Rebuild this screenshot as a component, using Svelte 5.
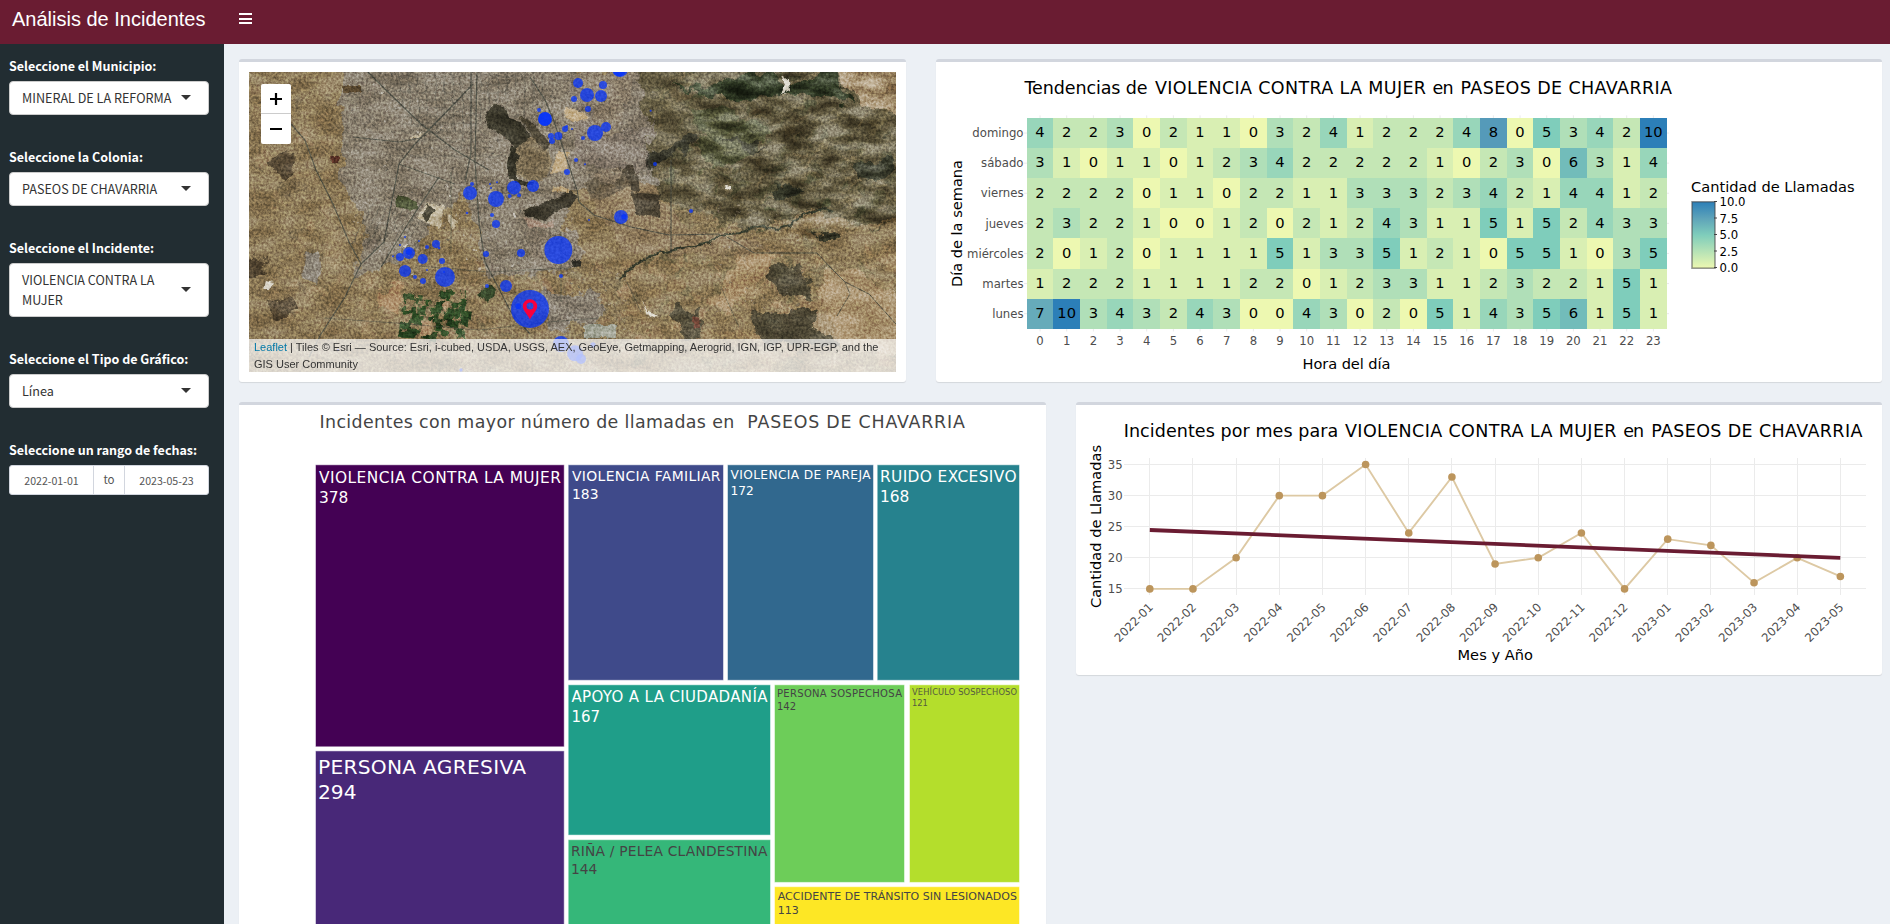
<script>
  const selects = [
    { label: 'Seleccione el Municipio:', value: 'MINERAL DE LA REFORMA' },
    { label: 'Seleccione la Colonia:', value: 'PASEOS DE CHAVARRIA' },
    { label: 'Seleccione el Incidente:', value: 'VIOLENCIA CONTRA LA MUJER' },
    { label: 'Seleccione el Tipo de Gráfico:', value: 'Línea' }
  ];

  // ---- Heatmap ----
  const days = [
    ['domingo', [4,2,2,3,0,2,1,1,0,3,2,4,1,2,2,2,4,8,0,5,3,4,2,10]],
    ['sábado', [3,1,0,1,1,0,1,2,3,4,2,2,2,2,2,1,0,2,3,0,6,3,1,4]],
    ['viernes', [2,2,2,2,0,1,1,0,2,2,1,1,3,3,3,2,3,4,2,1,4,4,1,2]],
    ['jueves', [2,3,2,2,1,0,0,1,2,0,2,1,2,4,3,1,1,5,1,5,2,4,3,3]],
    ['miércoles', [2,0,1,2,0,1,1,1,1,5,1,3,3,5,1,2,1,0,5,5,1,0,3,5]],
    ['martes', [1,2,2,2,1,1,1,1,2,2,0,1,2,3,3,1,1,2,3,2,2,1,5,1]],
    ['lunes', [7,10,3,4,3,2,4,3,0,0,4,3,0,2,0,5,1,4,3,5,6,1,5,1]]
  ];
  const scale = ['#edf8b1', '#d9efb3', '#c5e7b5', '#b0dfb8', '#98d6ba', '#7fcdbb', '#72bcba', '#66abba', '#559ab9', '#448db9', '#2c7fb8'];
  const cw = 640 / 24, ch = 210.7 / 7;
  const hx = (i) => 1026.7 + i * cw;
  const hy = (i) => 118 + i * ch;
  const heatTitle = [['Tendencias de', 1024.5, 123], ['VIOLENCIA CONTRA LA MUJER', 1155, 271], ['en', 1432.5, 21], ['PASEOS DE CHAVARRIA', 1460.5, 211.5]];
  const lineTitle = [['Incidentes por mes para', 1123.700, 214.5], ['VIOLENCIA CONTRA LA MUJER', 1345, 271.5], ['en', 1623.200, 21], ['PASEOS DE CHAVARRIA', 1651.200, 211.2]];
  const treeTitle = [['Incidentes con mayor número de llamadas en', 319.500, 414.8], ['PASEOS DE CHAVARRIA', 747.300, 217.5]];

  // ---- Treemap ----
  const tiles = [
    { n: 'VIOLENCIA CONTRA LA MUJER', v: 378, x: 315, y: 464.300, w: 249.7, h: 283, c: '#440154', t: '#fff', s: 15.4, tx: 319, len: 242, b: 483, d: 20 },
    { n: 'PERSONA AGRESIVA', v: 294, x: 315, y: 750.400, w: 249.7, h: 220, c: '#482878', t: '#fff', s: 20.2, tx: 318, len: 208, b: 773.5, d: 25.7 },
    { n: 'VIOLENCIA FAMILIAR', v: 183, x: 567.700, y: 464.300, w: 156.300, h: 216.500, c: '#3f4a8a', t: '#fff', s: 13.9, tx: 572, len: 148.500, b: 481.300, d: 18 },
    { n: 'VIOLENCIA DE PAREJA', v: 172, x: 727, y: 464.300, w: 147, h: 216.500, c: '#31688e', t: '#fff', s: 12.2, tx: 730.5, len: 140, b: 479.3, d: 15.8 },
    { n: 'RUIDO EXCESIVO', v: 168, x: 876.700, y: 464.300, w: 143.300, h: 216.500, c: '#26828e', t: '#fff', s: 15.4, tx: 880, len: 136.500, b: 482.300, d: 20 },
    { n: 'APOYO A LA CIUDADANÍA', v: 167, x: 567.700, y: 684.300, w: 203.300, h: 151.300, c: '#1f9e89', t: '#fff', s: 15, tx: 571.5, len: 196, b: 702.400, d: 20 },
    { n: 'RIÑA / PELEA CLANDESTINA', v: 144, x: 567.700, y: 839.200, w: 203.300, h: 140, c: '#35b779', t: '#444', s: 13.8, tx: 571, len: 196.500, b: 855.5, d: 18 },
    { n: 'PERSONA SOSPECHOSA', v: 142, x: 774, y: 684.300, w: 131, h: 198.600, c: '#6dcd59', t: '#444', s: 10, tx: 777, len: 125, b: 697.4, d: 13 },
    { n: 'VEHÍCULO SOSPECHOSO', v: 121, x: 909, y: 684.300, w: 111, h: 198.600, c: '#b4de2c', t: '#444', s: 8.3, tx: 912, len: 105, b: 695.3, d: 11, o: 0.85 },
    { n: 'ACCIDENTE DE TRÁNSITO SIN LESIONADOS', v: 113, x: 774, y: 886.200, w: 246, h: 100, c: '#fde725', t: '#444', s: 11, tx: 777.7, len: 239.3, b: 899.500, d: 14.3 }
  ];

  // ---- Line chart ----
  const months = ['2022-01','2022-02','2022-03','2022-04','2022-05','2022-06','2022-07','2022-08','2022-09','2022-10','2022-11','2022-12','2023-01','2023-02','2023-03','2023-04','2023-05'];
  const counts = [15,15,20,30,30,35,24,33,19,20,24,15,23,22,16,20,17];
  const lx = (i) => 1149.8 + i * 43.16;
  const ly = (v) => 588.9 - (v - 15) * 6.217;
  const linePts = counts.map((v, i) => `${lx(i)},${ly(v)}`).join(' ');

  // ---- Map ----
  const pts = [
    [945,207,21],[945,207,20],[927,180,6],[1005,237,9],[1010,229,4],[985,258,12],[963,258,9],[966,273,9],[1026,237,3],[1011,366,9],[1038,330,6],
    [720,429,21],[726,402,6],[798,447,24],[852,413,21],[909,408,18],[839,438,6],[867,436,6],[780,402,3],[783,414,3],[801,397,3],
    [711,489,4],[786,495,6],[798,522,12],[985,600,42],[873,609,12],[768,612,9],[993,678,6],[828,708,18],[771,708,6],
    [900,777,57],[865,769,9],[525,561,3],[567,573,3],[510,585,3],[591,591,6],[618,582,12],[627,594,4],[537,609,18],[537,606,9],
    [510,621,12],[489,619,3],[578,627,15],[636,633,9],[525,663,18],[591,660,3],[555,681,6],[579,693,9],[645,681,30],[642,666,3],
    [993,882,24],[1035,910,24],[1053,927,15],[1089,885,8],[693,960,5],[324,900,3],[1044,99,15],[1119,105,12],[1071,135,21],[1113,138,18],
    [1032,147,9],[1074,177,9],[1170,57,24],[1168,60,19],[1095,249,24],[1128,231,15],[1059,264,6],[1065,343,3],[1262,182,3],[1275,342,6],
    [1383,483,6],[1173,501,21],[1182,500,8],[1077,510,3]
  ].map(([x, y, r]) => ({ x: x / 3 - 19, y: y / 3 - 22, r: r / 3 }));

  let seed = 7;
  const rnd = () => { seed = (seed * 16807) % 2147483647; return seed / 2147483647; };
  function scatter(n, x, y, w, h, min, max, colors, rot = 0) {
    return Array.from({ length: n }, () => ({
      x: x + rnd() * w, y: y + rnd() * h, w: min + rnd() * (max - min), h: min + rnd() * (max - min) * 0.8,
      c: colors[Math.floor(rnd() * colors.length)], r: rot + rnd() * 12, o: 0.3 + rnd() * 0.45
    }));
  }
  const fields = [
    ...scatter(240, 0, 0, 130, 300, 3, 14, ['#927d5a','#857253','#9a8360','#847352','#75664b','#9f8762'], 15),
    ...scatter(180, 130, 190, 250, 110, 4, 15, ['#997e5d','#8b7553','#7a6e52','#a08766','#807356'], 5),
    ...scatter(320, 370, 165, 277, 135, 4, 17, ['#a58b64','#9a7f5b','#827250','#746c4e','#ab8f6b','#8c7854'], 20)
  ];
  const slopes = scatter(320, 395, 0, 252, 160, 4, 20, ['#57543a','#4a4a33','#6d6246','#655b41','#776c4c','#505339','#807252'], -30)
    .map((f) => ({ ...f, h: f.h * 0.45 }));
  const farms = scatter(80, 150, 218, 66, 44, 4, 9, ['#24401d','#2d4725','#213a1c','#3f5531','#84714f','#2e4a24'], 5);
  const grey = ['#a69d90','#676156','#968d80','#57574f','#b2a99d','#806e61'];
  const roofs = [
    ...scatter(1300, 92, 0, 228, 118, 0.6, 1.9, grey),
    ...scatter(420, 100, 110, 140, 75, 0.6, 1.9, grey),
    ...scatter(420, 225, 105, 100, 100, 0.6, 1.9, grey),
    ...scatter(380, 315, 15, 90, 90, 0.6, 1.8, grey),
    ...scatter(220, 290, 190, 90, 70, 0.6, 1.8, grey),
    ...scatter(200, 440, 130, 120, 110, 0.6, 2, grey)
  ];
  const whites = scatter(60, 120, 10, 150, 190, 0.8, 3, ['#cfcbc2','#e2dfd7','#bab5ab']);
  const streets = [
    ...Array.from({ length: 17 }, (_, i) => `M${150 + i * 9} 0l${3 - i * 0.3} ${34 + rnd() * 45}`),
    ...Array.from({ length: 11 }, (_, i) => `M${140 + rnd() * 15} ${4 + i * 8}h${90 + rnd() * 55}`),
    ...Array.from({ length: 9 }, (_, i) => `M${125 + i * 7} ${130 + i * 2}l-22 42`)
  ].join('');
</script>

{#snippet title(parts, y, size, fill)}
  <text {y} font-size={size} {fill}>
    {#each parts as [words, x, len]}<tspan {x} textLength={len}>{words}</tspan>{/each}
  </text>
{/snippet}

<div class="app">
  <header>
    <div class="brand">Análisis de Incidentes</div>
    <button class="toggle" aria-label="menu"><i></i><i></i><i></i></button>
  </header>
  <div class="shell">
    <aside>
      {#each selects as s}
        <div class="field">
          <div class="label">{s.label}</div>
          <div class="select"><span>{s.value}</span><i class="caret"></i></div>
        </div>
      {/each}
      <div class="field">
        <div class="label">Seleccione un rango de fechas:</div>
        <div class="dates"><span>2022-01-01</span><span class="to">to</span><span>2023-05-23</span></div>
      </div>
    </aside>

    <main>
      <div class="row first">
        <section class="box map-box">
          <div class="map">
            <svg width="647" height="300" viewBox="0 0 647 300">
              <defs>
                <filter id="rag" x="-5%" y="-5%" width="110%" height="110%" color-interpolation-filters="sRGB">
                  <feTurbulence type="fractalNoise" baseFrequency="0.06" numOctaves="4" seed="4" />
                  <feDisplacementMap in="SourceGraphic" scale="22" xChannelSelector="R" yChannelSelector="G" />
                </filter>
                <filter id="ragSmall" x="-5%" y="-5%" width="110%" height="110%" color-interpolation-filters="sRGB">
                  <feTurbulence type="fractalNoise" baseFrequency="0.12" numOctaves="3" seed="9" />
                  <feDisplacementMap in="SourceGraphic" scale="6" xChannelSelector="R" yChannelSelector="G" />
                </filter>
                <filter id="grain" x="0" y="0" width="100%" height="100%" color-interpolation-filters="sRGB">
                  <feTurbulence type="fractalNoise" baseFrequency="0.4" numOctaves="3" seed="3" />
                  <feColorMatrix values="1.8 0 0 0 -0.36  1.8 0 0 0 -0.36  1.8 0 0 0 -0.36  0 0 0 0 1" />
                </filter>
                <filter id="relief" x="0" y="0" width="100%" height="100%" color-interpolation-filters="sRGB">
                  <feTurbulence type="fractalNoise" baseFrequency="0.03 0.07" numOctaves="5" seed="12" />
                  <feColorMatrix values="2.2 0 0 0 -0.56  2.2 0 0 0 -0.56  2.2 0 0 0 -0.56  0 0 0 0 1" />
                </filter>
                <linearGradient id="fadeX"><stop offset="0" stop-color="#000" /><stop offset=".35" stop-color="#fff" /></linearGradient>
                <mask id="hills"><path d="M380 0H647V150L560 170L380 120Z" fill="url(#fadeX)" /></mask>
              </defs>
              <rect width="647" height="300" fill="#8a7755" />
              <g filter="url(#rag)">
                {#each fields as f}
                  <rect x={f.x} y={f.y} width={f.w} height={f.h} fill={f.c} opacity={f.o} transform="rotate({f.r} {f.x} {f.y})" />
                {/each}
                <path d="M390-10H670V145L610 152L560 140L500 158L420 130L380 90L372 40Z" fill="#625a41" />
                {#each slopes as f}
                  <rect x={f.x} y={f.y} width={f.w} height={f.h} fill={f.c} opacity={f.o} transform="rotate({f.r} {f.x} {f.y})" />
                {/each}
                <path d="M92-18H320L350 60L400 60L405 110L325 118L300 200L240 205L215 120L150 190L105 205L118 160L92 110Z" fill="#857c70" opacity=".85" />
                <path d="M320 0L385 0L400 40L400 100L330 95Z" fill="#887d70" opacity=".75" />
                <path d="M330 120L400 110L440 160L520 170L500 185L380 180Z" fill="#927f62" opacity=".6" />
                <path d="M290 218L350 222L352 245L300 262Z" fill="#877e70" />
                <path d="M280 165L320 158L335 180L325 200L285 195Z" fill="#8a7f6f" />
                <path d="M585-10H657V45L620 40L600 20Z" fill="#a69170" />
                <path d="M450 15L500 0L560 12L585-10L600 32L560 22L500 28L420 14Z" fill="#2e3723" />
                <path d="M440 40Q480 30 520 60Q500 100 460 90Z" fill="#444d30" opacity=".6" />
                <path d="M400 80L425 75L440 60L450 66L425 88L395 100Z M470 60L500 72L520 75L500 80Z" fill="#35342a" opacity=".8" />
                <path d="M20 85L42 78L45 100L30 108Z M-4 188L18 185L14 206L-4 206Z M20 230L42 224L48 240L26 248Z" fill="#463b2a" opacity=".8" />
                <path d="M515 200L550 190L566 228L530 222Z M508 240L560 235L586 250L590 272L505 268Z M428 235L450 236L455 268L430 262Z" fill="#454233" opacity=".85" />
                <path d="M600 95L640 84L650 98L610 112Z M566 160L588 158L590 168L568 168Z M525 115L560 118L548 128L525 125Z" fill="#34372a" opacity=".85" />
                <path d="M490 185L530 178L520 200L500 215L480 240L462 232Z" fill="#ac916c" opacity=".8" />
                <path d="M575 200L600 195L660 235V280H610L565 255Z" fill="#ae9673" opacity=".85" />
                <path d="M130 218L155 208L150 240L125 235Z" fill="#a98763" opacity=".9" />
              </g>
              <g filter="url(#ragSmall)">
                <path d="M336 110L372 95L384 112L360 125L342 128Z" fill="#5b5140" opacity=".8" />
                <path d="M340 105L355 98L376 96L366 112Z" fill="#93836e" opacity=".7" />
                <path d="M382 120L412 123L410 145L388 143Z M378 92Q392 98 390 120L382 118Q382 104 372 100Z" fill="#413b2d" opacity=".9" />
                {#each roofs as f}
                  <rect x={f.x} y={f.y} width={f.w} height={f.h} fill={f.c} opacity={f.o} />
                {/each}
                <path d={streets} fill="none" stroke="#55544b" stroke-width=".8" opacity=".6" />
                {#each farms as f}
                  <rect x={f.x} y={f.y} width={f.w} height={f.h} fill={f.c} transform="rotate(8 {f.x} {f.y})" />
                {/each}
                <path d="M172 250L184 246L182 262L172 264Z M192 232L200 230L198 240Z" fill="#a88a67" />
                <path d="M228 222L240 212L248 218L240 232Z" fill="#2b3b20" />
                {#each whites as f}
                  <rect x={f.x} y={f.y} width={f.w} height={f.h} fill={f.c} opacity={f.o} />
                {/each}
                <path d="M237 48Q238 32 250 33Q258 36 260 46L272 50L282 66L268 86L268 104L260 104L258 92L264 74L252 62L240 56Z" fill="#3b382b" />
                <path d="M264 86L272 72L284 64L298 72L303 92L297 106L284 111L268 102Z" fill="#7d6f55" />
                <path d="M270 44L280 48L302 72L296 78L282 64Z" fill="#4a4333" />
                <path d="M262 74L270 84L264 96L270 108L286 112L276 114L260 106L258 92Z" fill="#2f2d22" />
                <path d="M274 138L300 130L322 118L329 126L318 136L305 140L297 149L276 144Z" fill="#3a362a" />
                <path d="M308 80L320 80L318 98L302 102Z M318 36L334 40L340 48L324 50L314 44Z M304 114L320 116L320 121L305 120Z" fill="#b9a27b" />
                <path d="M274 145L292 150L296 152L304 148L306 156L282 156Z" fill="#a38c7a" />
                <path d="M168 148L178 131L196 134L190 158L178 150Z M200 142L209 150L206 156L199 150Z M160 66L172 60L173 63L162 68Z" fill="#c1b69c" />
                <path d="M179 132L186 138L176 150L174 142Z" fill="#4d4939" />
                <path d="M148 122L168 130L168 138L146 134Z" fill="#454c2f" />
                <path d="M56 180L70 180L73 200L68 212L54 206Z" fill="#8b8376" />
                <path d="M82 84L90 84L90 91L83 91Z M443 244L451 246L452 256L445 256Z" fill="#643a2d" />
                <path d="M94 14L113 14L113 21L94 20Z" fill="#5c4b32" />
                <path d="M393 230L398 238L408 244L400 246Z M532 3L540 8L541 18L532 22L536 12Z M476 112L482 114L482 119L477 118Z M16 208L24 210L20 218L14 218Z" fill="#ddd8cc" />
                <path d="M335 253H367V266H335Z" fill="#9fa192" />
                <path d="M322 188L332 186L332 194L324 196Z" fill="#35332b" />
              </g>
              <path d="M370 207L376 200L401 184L424 178L460 171L471 163L490 161L508 154L530 157L542 153L553 143L578 135L584 140" fill="none" stroke="#363b2d" stroke-width="2" filter="url(#ragSmall)" />
              <rect width="647" height="300" filter="url(#relief)" style="mix-blend-mode:soft-light" opacity=".3" />
              <g mask="url(#hills)" style="mix-blend-mode:soft-light" opacity=".5">
                <rect width="647" height="300" filter="url(#relief)" />
              </g>
              <g fill="none" stroke="#43473f" stroke-width="1.2" opacity=".8">
                <path d="M119 0L141 22L172 52L206 78L240 98" />
                <path d="M222 0V80L216 110M228 0L226 90L230 150L236 190L262 240L281 262" />
                <path d="M224 12L205 32L166 72L150 92L135 170L112 192" />
                <path d="M42 52L56 68L67 98L84 132L100 170L112 192" />
                <path d="M112 192L96 225L72 262L60 285" />
                <path d="M190 105L160 150L132 195" />
                <path d="M104 65L150 70L172 66M150 92L206 112" stroke-width=".9" />
                <path d="M281 5L296 28L306 52L318 88L328 118L330 130L345 143L382 155L420 163L470 162" />
                <path d="M422 88V180" />
                <path d="M478 165L505 181H568L582 196L596 210L620 222L647 252" stroke-width="1" />
                <path d="M596 210L601 222L588 244" stroke-width=".8" />
                <path d="M75 246L160 252L230 258L300 250L350 246M170 194L240 200L320 196" stroke-width=".8" opacity=".7" />
                <path d="M312 160V230M472 215L490 255M378 210L392 240M202 100V180" stroke-width=".8" opacity=".7" />
              </g>
              <rect width="647" height="300" filter="url(#grain)" style="mix-blend-mode:overlay" opacity=".3" />
              {#each pts as p}
                <circle cx={p.x} cy={p.y} r={p.r} fill="#0433ff" opacity=".74" />
              {/each}
              <path fill-rule="evenodd" d="M281 247.5C280 244 273.8 238.4 273.8 234.4A7.2 7.2 0 0 1 288.200 234.4C288.200 238.4 282 244 281 247.5ZM281 230.600A3.500 3.500 0 1 0 281 237.600A3.500 3.500 0 1 0 281 230.600Z" fill="#f9003c" />
            </svg>
            <div class="zoom"><span><svg width="14" height="14"><path d="M7 1V13M1 7H13" stroke="#000" stroke-width="2.2" /></svg></span><span><svg width="14" height="14"><path d="M1 7H13" stroke="#000" stroke-width="2" /></svg></span></div>
            <div class="attrib"><b>Leaflet</b> | Tiles © Esri — Source: Esri, i-cubed, USDA, USGS, AEX, GeoEye, Getmapping, Aerogrid, IGN, IGP, UPR-EGP, and the<br />GIS User Community</div>
          </div>
        </section>

        <section class="box heat-box">
          <svg width="946" height="320" viewBox="936 62 946 320">
            {@render title(heatTitle, 94, 17.5, '#000')}
            <g stroke="#ebebeb">
              {#each Array(24) as _, i}
                <path d="M{hx(i) + cw / 2} 115.300V331.500" />
              {/each}
              {#each days as _, i}
                <path d="M1024 {hy(i) + ch / 2}H1669" />
              {/each}
            </g>
            {#each days as [day, vals], r}
              <text class="tick" text-anchor="end" x="1023.5" y={hy(r) + ch / 2 + 4.2}>{day}</text>
              {#each vals as v, c}
                <rect x={hx(c)} y={hy(r)} width={cw + 0.3} height={ch + 0.3} fill={scale[v]} shape-rendering="crispEdges" />
              {/each}
              {#each vals as v, c}
                <text font-size="14.7" text-anchor="middle" x={hx(c) + cw / 2} y={hy(r) + ch / 2 + 4.300}>{v}</text>
              {/each}
            {/each}
            {#each Array(24) as _, i}
              <text class="tick" text-anchor="middle" x={hx(i) + cw / 2} y="345.3">{i}</text>
            {/each}
            <text x="1302.500" y="369" font-size="14.6" textLength="88">Hora del día</text>
            <text transform="translate(962.3 287) rotate(-90)" font-size="14.6" textLength="127">Día de la semana</text>
            <text x="1691" y="192.300" font-size="14.6" textLength="163.500">Cantidad de Llamadas</text>
            <defs>
              <linearGradient id="bar" x1="0" x2="0" y1="0" y2="1">
                <stop offset="0" stop-color="#2c7fb8" /><stop offset=".25" stop-color="#5ea3b9" /><stop offset=".5" stop-color="#7fcdbb" /><stop offset="1" stop-color="#edf8b1" />
              </linearGradient>
            </defs>
            <rect x="1692" y="201.800" width="23" height="66.400" fill="url(#bar)" stroke="#444" stroke-opacity=".55" stroke-width="1.600" />
            {#each ['10.0', '7.5', '5.0', '2.5', '0.0'] as l, i}
              <path d="M1714 {201.500 + i * 16.500}H1717" stroke="#444" />
              <text x="1719.500" y={206 + i * 16.500} font-size="11.7">{l}</text>
            {/each}
          </svg>
        </section>
      </div>

      <div class="row">
        <section class="box tree-box">
          <svg width="807" height="560" viewBox="239 405 807 560">
            {@render title(treeTitle, 428.3, 17.4, '#444')}
            {#each tiles as t}
              <rect x={t.x + 0.5} y={t.y + 0.5} width={t.w - 1} height={t.h - 1} fill={t.c} stroke="#fff" stroke-opacity=".5" />
              <text x={t.tx} y={t.b} font-size={t.s} fill={t.t} opacity={t.o ?? 1} textLength={t.len}>{t.n}</text>
              <text x={t.tx} y={t.b + t.d} font-size={t.s} fill={t.t} opacity={t.o ?? 1}>{t.v}</text>
            {/each}
          </svg>
        </section>

        <section class="box line-box">
          <svg width="806" height="270" viewBox="1076 405 806 270">
            {@render title(lineTitle, 437, 17.5, '#000')}
            <g stroke="#ebebeb">
              {#each [15, 20, 25, 30, 35] as v}
                <path d="M1124 {Math.floor(ly(v)) + 0.5}H1866" />
              {/each}
              {#each months as _, i}
                <path d="M{Math.floor(lx(i)) + 0.5} 458V595" />
              {/each}
            </g>
            {#each [15, 20, 25, 30, 35] as v}
              <text class="tick" text-anchor="end" x="1122.700" y={ly(v) + 4.200}>{v}</text>
            {/each}
            <polyline points={linePts} fill="none" stroke="#ddc9a4" stroke-width="1.900" />
            {#each counts as v, i}
              <circle cx={lx(i)} cy={ly(v)} r="3.800" fill="#bc955c" />
            {/each}
            <path d="M1149.800 530L1840.300 557.800" stroke="#6a1c32" stroke-width="3.800" />
            {#each months as m, i}
              <text class="tick" text-anchor="end" transform="translate({lx(i) + 4} {608}) rotate(-45)" textLength="49">{m}</text>
            {/each}
            <text x="1457.500" y="660" font-size="14.6" textLength="75.500">Mes y Año</text>
            <text transform="translate(1101 608) rotate(-90)" font-size="14.6" textLength="163">Cantidad de Llamadas</text>
          </svg>
        </section>
      </div>
    </main>
  </div>
</div>

<style>
  :global(body) { overflow: hidden; }
  .app { height: 924px; overflow: hidden; display: flex; flex-direction: column; background: #ecf0f5; font-family: 'Noto Sans CJK SC', 'Open Sans', sans-serif; }
  header { height: 44px; flex: none; display: flex; background: #6a1c32; color: #fff; }
  .brand { width: 224px; padding-left: 12px; box-sizing: border-box; font: 20px/38px 'Liberation Sans', Arial, sans-serif; white-space: nowrap; }
  .toggle { background: none; border: 0; padding: 13px 15px; display: flex; flex-direction: column; gap: 2.500px; }
  .toggle i { width: 13px; height: 2px; background: #fff; display: block; }
  .shell { display: flex; flex: 1; min-height: 0; }
  aside { width: 224px; flex: none; box-sizing: border-box; background: #222d32; padding: 12px 15px 0 9px; display: flex; flex-direction: column; gap: 32px; }
  .label { color: #fff; font-weight: 700; font-size: 12.5px; line-height: 20px; height: 20px; margin-bottom: 5px; white-space: nowrap; }
  .select { display: flex; justify-content: space-between; align-items: center; box-sizing: border-box; min-height: 34px; padding: 6px 17px 6px 12px; background: #fff; border: 1px solid #ccc; border-radius: 4px; color: #333; font-size: 12.6px; line-height: 20px; }
  .select span { width: 157px; margin-right: -4px; }
  .caret { border: 5px solid transparent; border-top-color: #333; border-bottom: 0; margin-top: -2px; flex: none; }
  .dates { display: flex; height: 30px; box-sizing: border-box; background: #fff; border: 1px solid #d2d6de; border-radius: 3px; color: #555; font-size: 10.6px; line-height: 30px; text-align: center; }
  .dates span { flex: 1; }
  .dates .to { flex: none; width: 30px; border: solid #d2d6de; border-width: 0 1px; font-size: 11.5px; line-height: 27px; }
  main { flex: 1; padding: 15px 8px 0 15px; min-width: 0; }
  .row { display: flex; gap: 30px; align-items: flex-start; }
  .first { margin-bottom: 20px; }
  .box { box-sizing: border-box; flex: none; background: #fff; border-top: 3px solid #d2d6de; border-radius: 3px; box-shadow: 0 1px 1px rgba(0, 0, 0, 0.1); }
  .box svg { display: block; }
  .map-box { width: 667px; height: 323px; padding: 10px; }
  .heat-box { width: 946px; height: 323px; }
  .tree-box { width: 807px; height: 563px; }
  .line-box { width: 806px; height: 273px; }
  .heat-box svg, .tree-box svg, .line-box svg { font-family: Verdana, 'DejaVu Sans', sans-serif; }
  .tick { font-size: 11.7px; fill: #4d4d4d; }
  .map { position: relative; width: 647px; height: 300px; overflow: hidden; }
  .zoom { position: absolute; left: 12px; top: 12px; width: 30px; height: 60px; background: #fff; border-radius: 2px; }
  .zoom span { display: flex; align-items: center; justify-content: center; height: 29px; }
  .zoom span:first-child { border-bottom: 1px solid #ccc; }
  .attrib { position: absolute; left: 0; right: 0; bottom: 0; height: 33px; padding-left: 5px; box-sizing: border-box; background: rgba(255, 255, 255, 0.7); font: 11px/17px 'Liberation Sans', Arial, sans-serif; color: #333; white-space: nowrap; }
  .attrib b { font-weight: 400; color: #0078a8; }
</style>
